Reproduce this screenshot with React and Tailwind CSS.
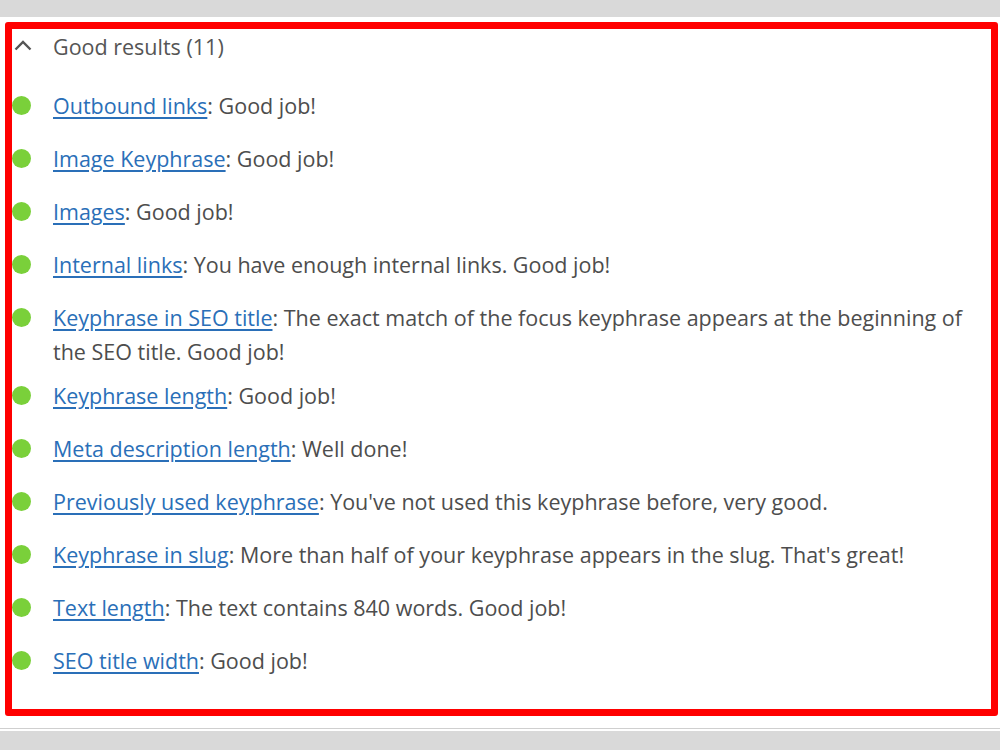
import React from "react";

const results = [
  { link: "Outbound links", text: "Good job!" },
  { link: "Image Keyphrase", text: "Good job!" },
  { link: "Images", text: "Good job!" },
  { link: "Internal links", text: "You have enough internal links. Good job!" },
  {
    link: "Keyphrase in SEO title",
    text: "The exact match of the focus keyphrase appears at the beginning of the SEO title. Good job!",
  },
  { link: "Keyphrase length", text: "Good job!" },
  { link: "Meta description length", text: "Well done!" },
  { link: "Previously used keyphrase", text: "You've not used this keyphrase before, very good." },
  { link: "Keyphrase in slug", text: "More than half of your keyphrase appears in the slug. That's great!" },
  { link: "Text length", text: "The text contains 840 words. Good job!" },
  { link: "SEO title width", text: "Good job!" },
];

function ChevronUp() {
  return (
    <svg width="20" height="13" viewBox="0 0 20 13" fill="none" className="block">
      <path d="M2.5 10.5 L10 3 L17.5 10.5" stroke="#555" strokeWidth="2.4" />
    </svg>
  );
}

export default function App() {
  return (
    <div
      className="w-[1000px] h-[750px] bg-white flex flex-col overflow-hidden"
      style={{ fontFamily: '"Open Sans", "Noto Sans", sans-serif' }}
    >
      <div className="h-[17px] bg-[#d9d9d9] shrink-0" />
      <div className="h-[5px] shrink-0" />
      <div className="ml-[5px] w-[993px] h-[694px] border-[7px] border-[#ff0000] rounded-[3px] shrink-0 flex flex-col">
        <div className="flex items-center h-[34px] mt-[1px]">
          <div className="w-[41px] pl-[1px] pb-[3px]">
            <ChevronUp />
          </div>
          <span className="text-[21.5px] text-[#555] leading-[34px]">Good results (11)</span>
        </div>
        <ul className="mt-[25px] flex flex-col gap-[10px] pr-[8px]">
          {results.map((r) => (
            <li key={r.link} className="flex items-start min-h-[43px]">
              <span className="w-[41px] shrink-0 pt-[7px]">
                <span className="block w-[19px] h-[19px] rounded-full bg-[#7ad03a]" />
              </span>
              <p className="text-[21.5px] leading-[34px] text-[#4d4d4d]">
                <a href="#" className="text-[#2a6fb8] underline underline-offset-[3px]">
                  {r.link}
                </a>
                : {r.text}
              </p>
            </li>
          ))}
        </ul>
      </div>
      <div className="h-[12px] shrink-0" />
      <div className="h-[1px] bg-[#cfcfcf] shrink-0" />
      <div className="h-[2px] shrink-0" />
      <div className="flex-1 bg-[#d9d9d9]" />
    </div>
  );
}
